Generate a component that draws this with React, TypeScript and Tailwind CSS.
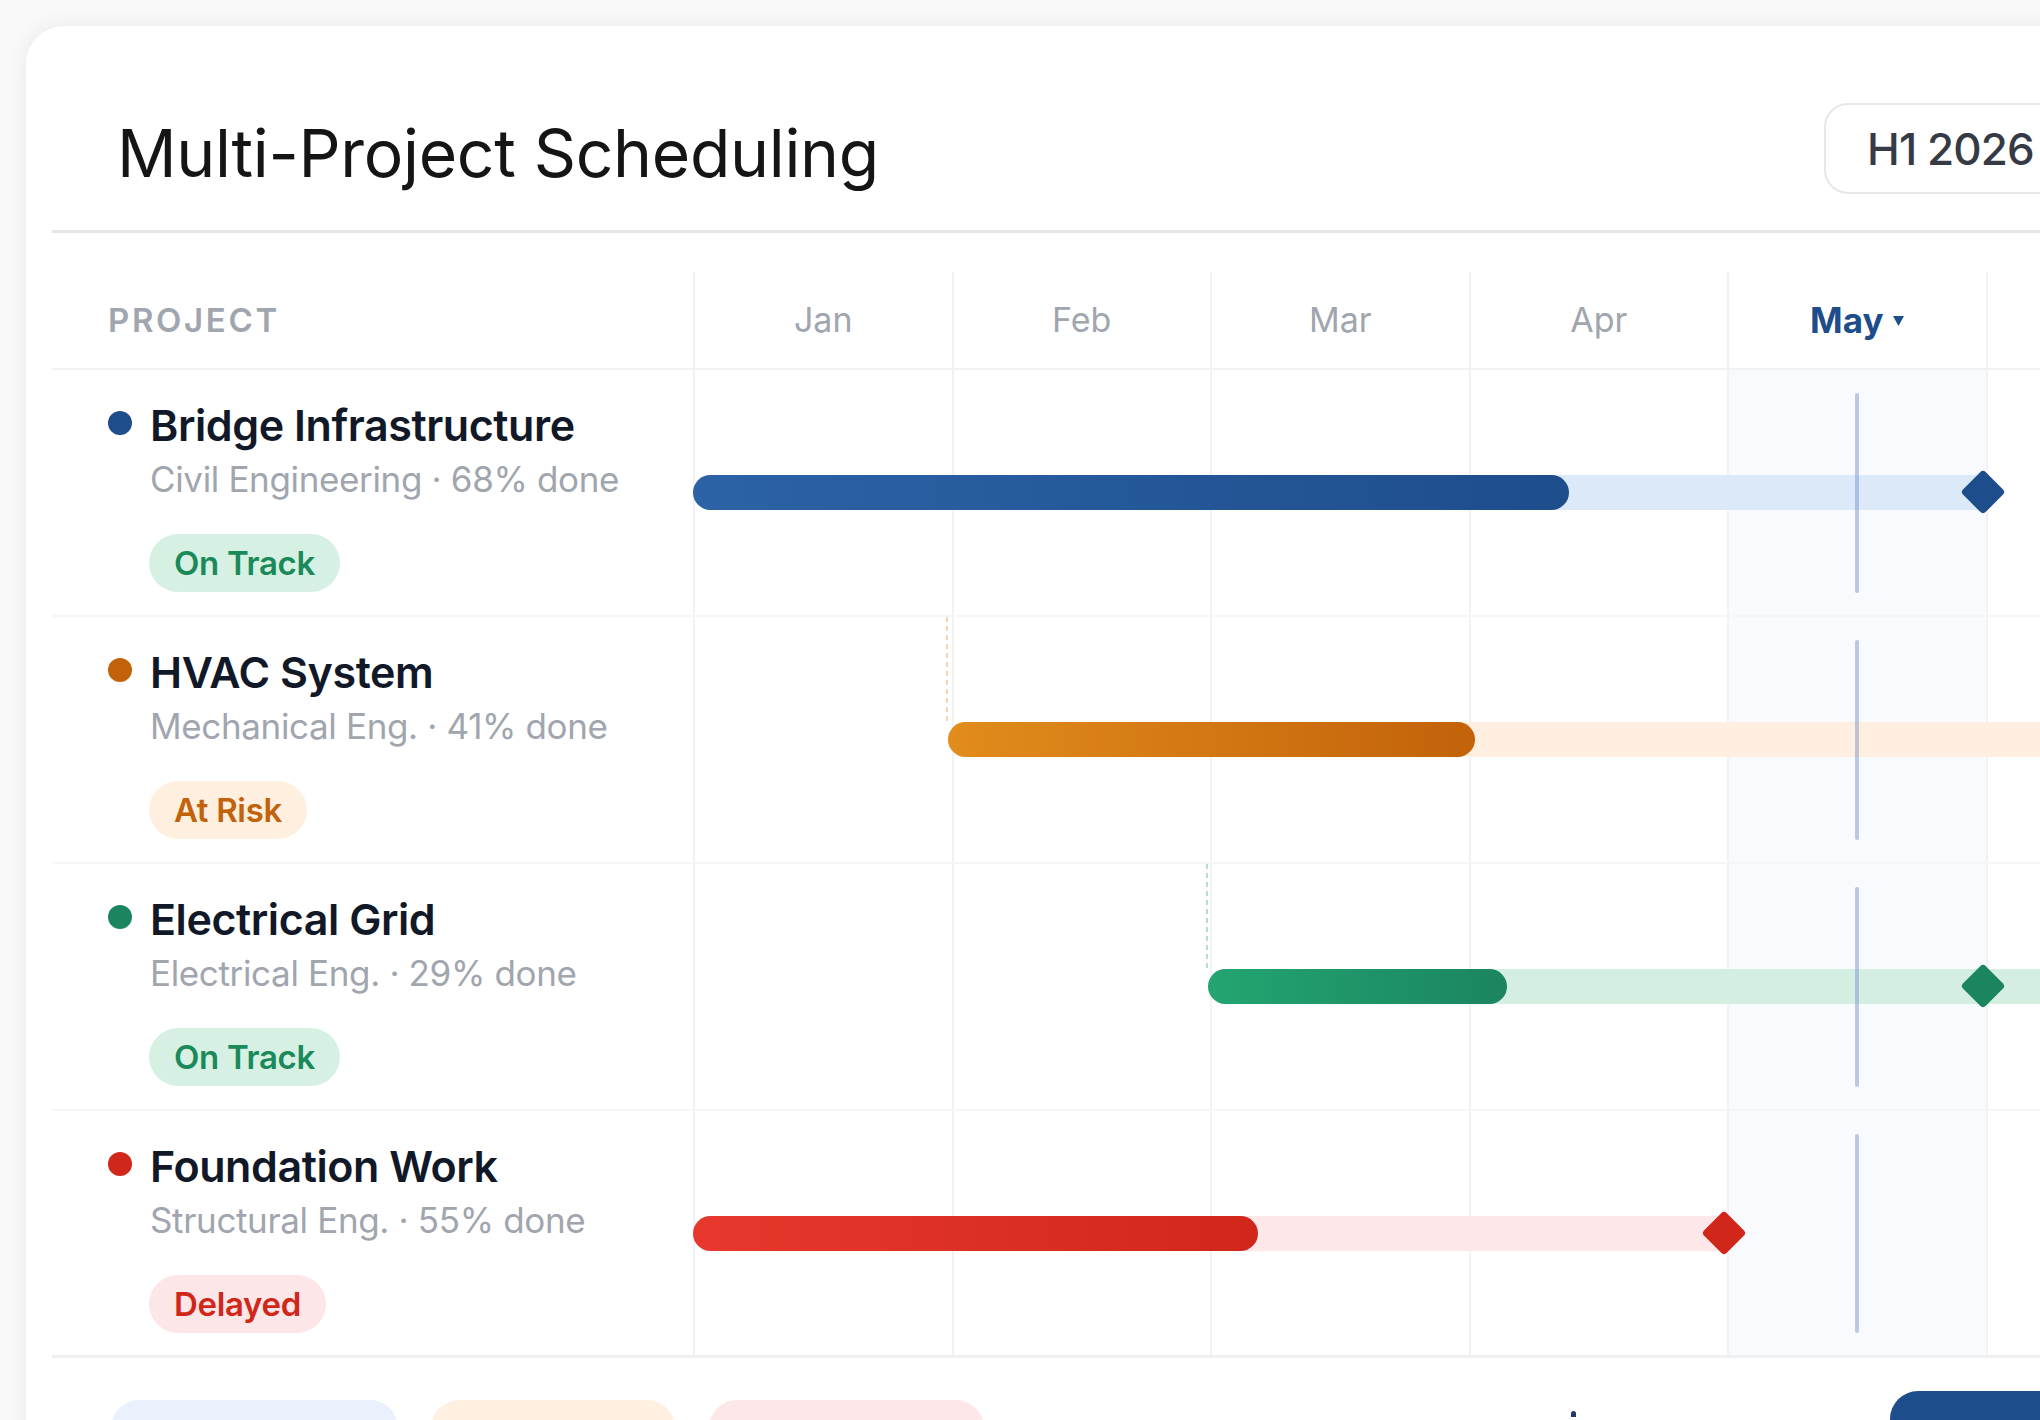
import React from "react";

type Row = {
  name: string;
  sub: string;
  dot: string;
  badge: string;
  badgeCls: string;
  start: number;
  prog: number;
  end: number;
  track: string;
  bar: string;
  diamond: number | null;
  diamondCls: string;
  dash: string | null;
};

const rows: Row[] = [
  {
    name: "Bridge Infrastructure",
    sub: "Civil Engineering · 68% done",
    dot: "bg-[#1e4d8c]",
    badge: "On Track",
    badgeCls: "bg-[#d6f1e4] text-[#1a8a5a]",
    start: 0,
    prog: 876,
    end: 1290,
    track: "bg-[#dce9f8]",
    bar: "bg-gradient-to-r from-[#2c63a6] to-[#1e4d8c]",
    diamond: 1290,
    diamondCls: "bg-[#1e4d8c]",
    dash: null,
  },
  {
    name: "HVAC System",
    sub: "Mechanical Eng. · 41% done",
    dot: "bg-[#c2620a]",
    badge: "At Risk",
    badgeCls: "bg-[#ffefdf] text-[#c2620a]",
    start: 255,
    prog: 527,
    end: 1700,
    track: "bg-[#ffefe0]",
    bar: "bg-gradient-to-r from-[#e18c1c] to-[#c2620a]",
    diamond: null,
    diamondCls: "",
    dash: "#f2c59c",
  },
  {
    name: "Electrical Grid",
    sub: "Electrical Eng. · 29% done",
    dot: "bg-[#1b8560]",
    badge: "On Track",
    badgeCls: "bg-[#d6f1e4] text-[#1a8a5a]",
    start: 515,
    prog: 299,
    end: 1700,
    track: "bg-[#d4eee2]",
    bar: "bg-gradient-to-r from-[#23a571] to-[#1b8560]",
    diamond: 1290,
    diamondCls: "bg-[#1b8560]",
    dash: "#9fd3bd",
  },
  {
    name: "Foundation Work",
    sub: "Structural Eng. · 55% done",
    dot: "bg-[#d1261a]",
    badge: "Delayed",
    badgeCls: "bg-[#fde6e7] text-[#d1261a]",
    start: 0,
    prog: 565,
    end: 1031,
    track: "bg-[#fde7e8]",
    bar: "bg-gradient-to-r from-[#e8382d] to-[#d1261a]",
    diamond: 1031,
    diamondCls: "bg-[#d1261a]",
    dash: null,
  },
];

const months = ["Jan", "Feb", "Mar", "Apr", "May", "Jun"];

function GridCols() {
  return (
    <div className="absolute inset-0 grid grid-cols-6">
      {months.map((m, i) => (
        <div
          key={m}
          className={
            "border-l-2 border-[#f1f2f4] " + (i === 4 ? "bg-[#f8fafd]" : "")
          }
        />
      ))}
    </div>
  );
}

export default function App() {
  return (
    <div
      className="relative w-[2040px] h-[1420px] overflow-hidden bg-[#f9f9fa]"
      style={{ fontFamily: "Inter, 'Noto Sans', sans-serif" }}
    >
      <div className="absolute left-[26px] top-[26px] w-[2300px] h-[1500px] rounded-tl-[38px] bg-white shadow-[0_0_22px_rgba(0,0,0,0.07)]">
        {/* Header */}
        <div className="flex items-start h-[204px] pl-[91px]">
          <div className="w-[1707px] shrink-0">
            <h1 className="mt-[94px] text-[66px] leading-none font-normal tracking-[-0.005em] text-[#151515]">
              Multi-Project Scheduling
            </h1>
          </div>
          <div className="mt-[77px] shrink-0 flex items-center h-[91px] w-[300px] rounded-[24px] border-2 border-[#e6e7ea] pl-[41px]">
            <span className="text-[44px] leading-none font-medium text-[#353a45] tracking-[-0.02em]">
              H1 2026
            </span>
          </div>
        </div>
        <div className="ml-[26px] h-[3px] bg-[#e5e6e8]" />

        {/* Table */}
        <div className="ml-[26px] mt-[39px] w-[2192px]">
          {/* header row */}
          <div className="flex h-[98px] border-b-2 border-[#f1f2f4]">
            <div className="w-[641px] flex items-center pl-[56px]">
              <span className="text-[33px] leading-none font-semibold tracking-[0.08em] text-[#a0a5ae]">
                PROJECT
              </span>
            </div>
            <div className="w-[1551px] grid grid-cols-6">
              {months.map((m, i) => (
                <div
                  key={m}
                  className="border-l-2 border-[#f1f2f4] flex items-center justify-center"
                >
                  {i === 4 ? (
                    <span className="flex items-center gap-[10px] text-[35px] leading-none font-bold text-[#1e4d8c]">
                      {m}
                      <svg width="11" height="10" viewBox="0 0 11 10" className="mt-[2px]">
                        <path d="M0 0 L11 0 L5.5 10 Z" fill="#1e4d8c" />
                      </svg>
                    </span>
                  ) : i < 5 ? (
                    <span className="text-[34px] leading-none font-normal text-[#a0a5ae]">
                      {m}
                    </span>
                  ) : null}
                </div>
              ))}
            </div>
          </div>

          {/* rows */}
          {rows.map((r, idx) => (
            <div
              key={r.name}
              className={
                "flex h-[247px] " +
                (idx === rows.length - 1
                  ? "border-b-[3px] border-[#eff0f2]"
                  : "border-b-2 border-[#f5f6f7]")
              }
            >
              <div className="w-[641px] flex items-start pl-[56px] pt-[34px]">
                <span className={"mt-[7px] w-[24px] h-[24px] rounded-full shrink-0 " + r.dot} />
                <div className="ml-[18px] flex flex-col items-start">
                  <span className="text-[43px] leading-none font-semibold tracking-[-0.01em] text-[#111827]">
                    {r.name}
                  </span>
                  <span className="mt-[15px] text-[35px] leading-none font-normal tracking-[-0.01em] text-[#a0a5ae]">
                    {r.sub}
                  </span>
                  <span
                    className={
                      "mt-[37px] -ml-[1px] h-[58px] px-[25px] rounded-full flex items-center text-[33px] leading-none font-semibold tracking-[-0.01em] " +
                      r.badgeCls
                    }
                  >
                    {r.badge}
                  </span>
                </div>
              </div>
              <div className="relative w-[1551px] h-full">
                <GridCols />
                {/* today line */}
                <div className="absolute left-[1162px] top-[23px] bottom-[22px] w-[4px] rounded-full bg-[#7a98c7]/50 z-20" />
                {/* dashed dependency */}
                {r.dash && (
                  <svg
                    className="absolute top-0 z-10"
                    style={{ left: r.start - 2 }}
                    width="2"
                    height="106"
                  >
                    <line x1="1" y1="0" x2="1" y2="106" stroke={r.dash} strokeWidth="1.5" strokeDasharray="5 4" />
                  </svg>
                )}
                {/* track */}
                <div
                  className={"absolute top-[105px] h-[35px] rounded-l-full z-10 " + r.track}
                  style={{ left: r.start, width: r.end - r.start }}
                />
                {/* progress */}
                <div
                  className={"absolute top-[105px] h-[35px] rounded-full z-10 " + r.bar}
                  style={{ left: r.start, width: r.prog }}
                />
                {r.diamond !== null && (
                  <div
                    className={"absolute top-[106px] w-[32px] h-[32px] rotate-45 rounded-[4px] z-30 " + r.diamondCls}
                    style={{ left: r.diamond - 16 }}
                  />
                )}
              </div>
            </div>
          ))}

          {/* footer */}
          <div className="flex items-start pl-[59px] mt-[42px]">
            <div className="w-[287px] h-[64px] rounded-[28px] bg-[#eaf1fd]" />
            <div className="ml-[33px] w-[244px] h-[64px] rounded-[28px] bg-[#fff0e1]" />
            <div className="ml-[34px] w-[275px] h-[64px] rounded-[28px] bg-[#fde7e8]" />
            <div className="ml-[587px] mt-[11px] w-[5px] h-[6px] rounded-t-full bg-[#1e3a6e]" />
            <div className="ml-[314px] -mt-[9px] w-[260px] h-[70px] rounded-[28px] bg-[#1e4d8c]" />
          </div>
        </div>
      </div>
    </div>
  );
}
